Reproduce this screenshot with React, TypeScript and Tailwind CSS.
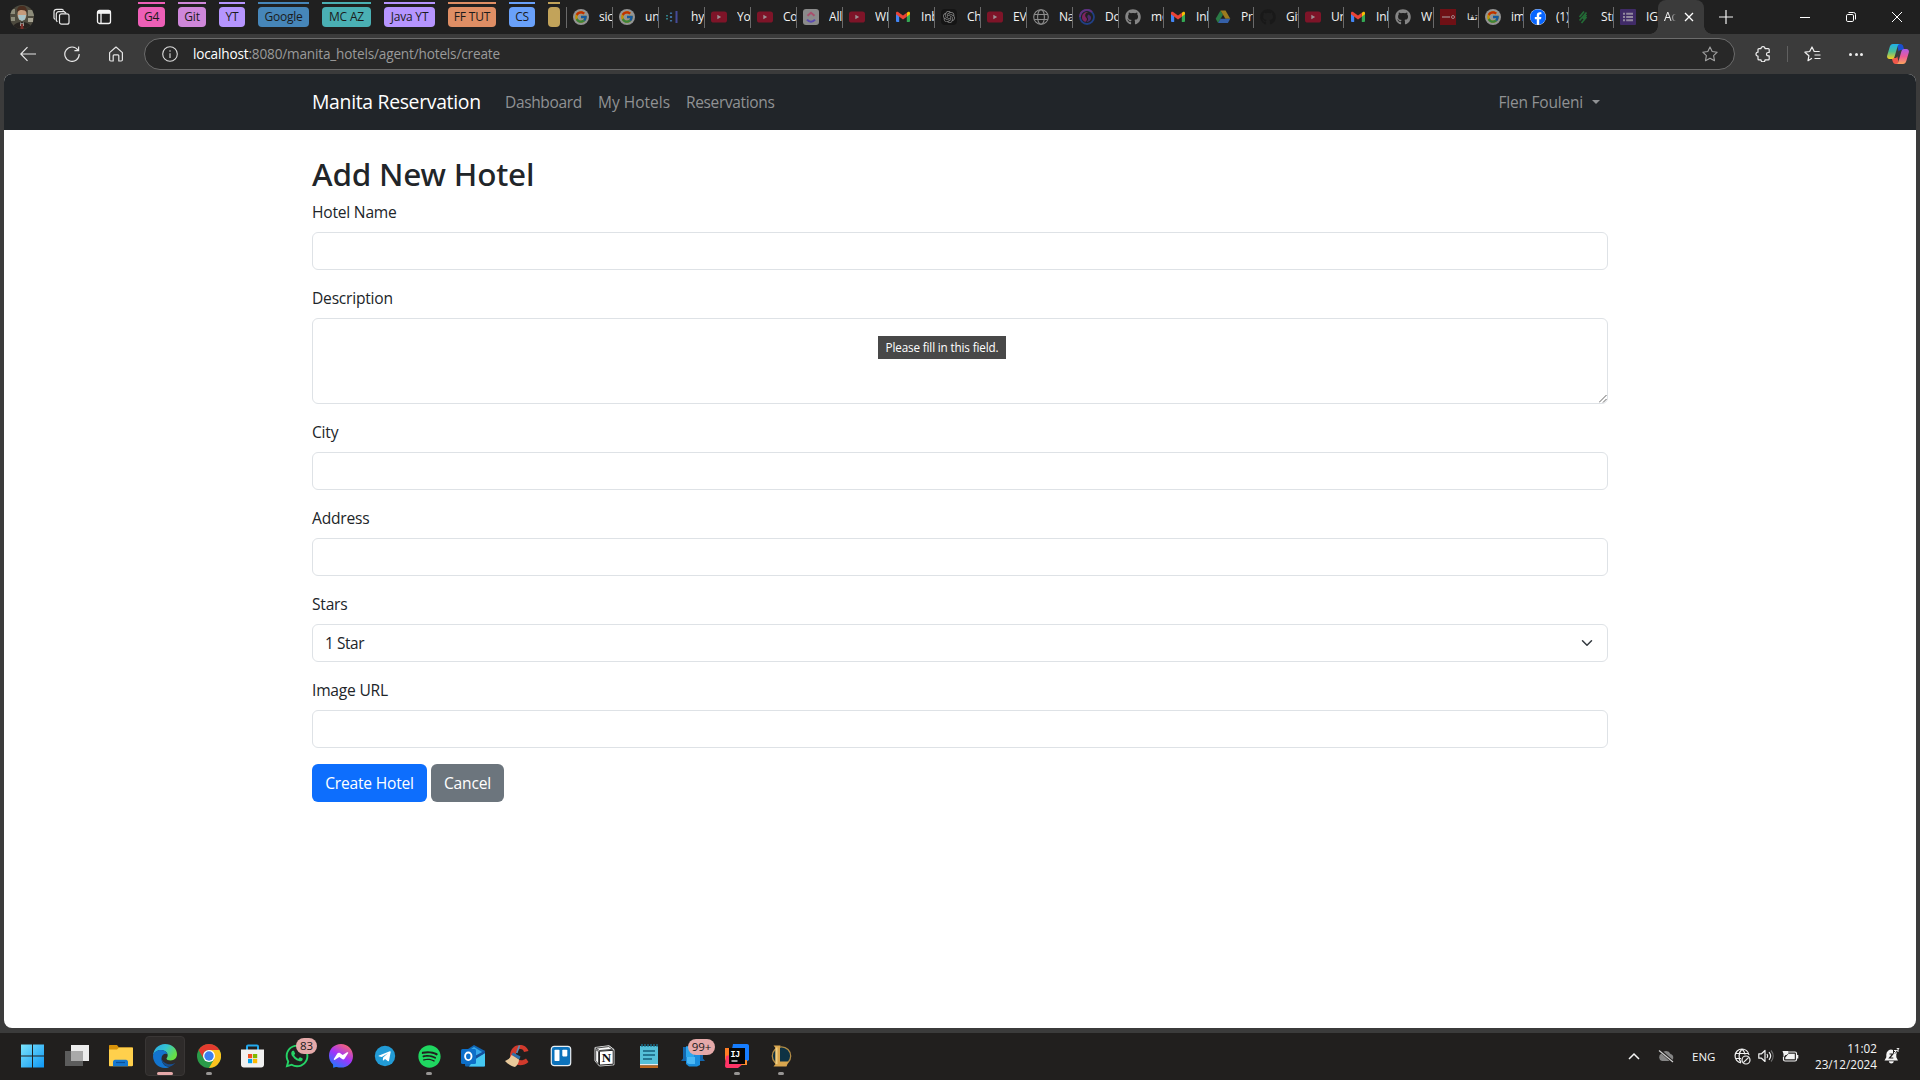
import type { ReactNode } from 'react';
import { FcGoogle } from 'react-icons/fc';
import { FaFacebook, FaGithub, FaSpotify, FaWhatsapp } from 'react-icons/fa';
import { SiOpenai } from 'react-icons/si';

/* ---------- tab strip icons ---------- */

const Google = () => (
  <span className="flex size-4 items-center justify-center rounded-full bg-[#949494]">
    <FcGoogle className="size-[14px] brightness-75" />
  </span>
);

const YouTube = () => (
  <svg viewBox="0 0 16 16" className="size-4">
    <rect y="2.5" width="16" height="11" rx="2.6" fill="#7e1428" />
    <path d="M6.3 5.7v4.6L10.2 8z" fill="#9c8f92" />
  </svg>
);

const Gmail = () => (
  <svg viewBox="0 0 16 16" className="size-4">
    <path d="M1 4.5l3.2 2.4V13H2a1 1 0 0 1-1-1z" fill="#4285f4" />
    <path d="M15 4.5l-3.2 2.4V13H14a1 1 0 0 0 1-1z" fill="#34a853" />
    <path d="M11.8 3.7l1.1-.8C13.800 2.300 15 2.900 15 4v1.300l-3.200 2.400z" fill="#fbbc04" />
    <path d="M1 4c0-1.100 1.200-1.700 2.100-1.100L8 6.600l3.800-2.900v4L8 10.600 1 5.300z" fill="#ea4335" />
  </svg>
);

const Bars = () => (
  <svg viewBox="0 0 16 16" className="size-4">
    <path d="M2 6v1.500M2 9v1.500" stroke="#2f7f86" strokeWidth="2" />
    <path d="M6 3.500V5M6 7v2M6 11v1.500" stroke="#3f6f9f" strokeWidth="2.200" />
    <path d="M11.500 2v12" stroke="#454a98" strokeWidth="2" />
  </svg>
);

const ClickUp = () => (
  <svg viewBox="0 0 16 16" className="size-4">
    <rect width="16" height="16" rx="3" fill="#8b8b8b" />
    <path d="M4.500 6.800L8 3.800l3.500 3" fill="none" stroke="#a84f6c" strokeWidth="2" />
    <path d="M4 10.600c2.200 2.800 5.800 2.800 8 0" fill="none" stroke="#5b4bb0" strokeWidth="2" />
  </svg>
);

const OpenAi = () => (
  <span className="flex size-4 items-center justify-center rounded-sm bg-[#151515]">
    <SiOpenai className="size-3 text-[#858585]" />
  </span>
);

const Globe = () => (
  <svg viewBox="0 0 16 16" className="size-4" fill="none" stroke="#8c8c8c" strokeWidth="1.100">
    <circle cx="8" cy="8" r="7.300" />
    <ellipse cx="8" cy="8" rx="3.400" ry="7.300" />
    <path d="M1.300 5.500h13.400M1.300 10.500h13.400" />
  </svg>
);

const Swirl = () => (
  <svg viewBox="0 0 16 16" className="size-4" fill="none">
    <circle cx="8" cy="8" r="7" stroke="#203f84" strokeWidth="1.800" />
    <path d="M1 8a7 7 0 0 1 12-5" stroke="#61307e" strokeWidth="1.800" />
    <path d="M9.500 3.200a3.200 3.200 0 0 0-2.500 5.400c1.500 1.400 1.300 3.200-.8 4.300A5 5 0 0 1 3 8a5 5 0 0 1 6.500-4.800z" fill="#7c2460" />
    <path d="M9 5.500c2.500.5 3.600 2.500 3 4.500-.7 2-2.500 3-4.800 3 2.300-1.200 2.600-3.200 1-4.900" fill="#4d2a70" />
  </svg>
);

const GitHub = () => <FaGithub className="size-4 text-[#858585]" />;
const GitHubDark = () => <FaGithub className="size-4 text-[#191919]" />;

const Drive = () => (
  <svg viewBox="0 0 16 16" className="size-4">
    <path d="M5.500 1.500L.7 9.800l2.400 4.100L8 5.700z" fill="#2a7a45" />
    <path d="M5.500 1.500h5L15.300 9.800h-4.900z" fill="#9c7c1f" />
    <path d="M5.500 9.800h9.800l-2.400 4.100H3.100z" fill="#3560a8" />
  </svg>
);

const RedTag = () => (
  <span className="flex size-4 items-center justify-center gap-px bg-[#6f1015]">
    <span className="h-[2px] w-[8px] bg-[#8d5a5d]" />
    <span className="size-[4px] rounded-full border border-[#a08486]" />
  </span>
);

const Facebook = () => (
  <span className="flex size-4 rounded-full bg-white">
    <FaFacebook className="size-4 text-[#0866ff]" />
  </span>
);

const Strips = () => (
  <svg viewBox="0 0 16 16" className="size-4" fill="none" stroke="#236b36" strokeWidth="1.700">
    <path d="M4.500 8L9 2.500M4.500 11.500l7-8M8 10l3.500-4M6.500 14L11.500 8" />
  </svg>
);

const Forms = () => (
  <svg viewBox="0 0 16 16" className="size-4">
    <rect width="16" height="16" rx="1" fill="#402b67" />
    <path d="M3 4.700h2M3 8h2M3 11.300h2M6.200 4.700H13M6.200 8H13M6.200 11.300H13" stroke="#93899f" strokeWidth="1.900" />
  </svg>
);

type Tab = { icon: () => ReactNode; title: string; narrow?: boolean; noEdge?: boolean; rtl?: boolean };

const tabs: Tab[] = [
  { icon: Google, title: 'sic' },
  { icon: Google, title: 'un' },
  { icon: Bars, title: 'hy' },
  { icon: YouTube, title: 'Yo' },
  { icon: YouTube, title: 'Co' },
  { icon: ClickUp, title: 'All' },
  { icon: YouTube, title: 'WI' },
  { icon: Gmail, title: 'Inb' },
  { icon: OpenAi, title: 'Ch' },
  { icon: YouTube, title: 'EV' },
  { icon: Globe, title: 'Na' },
  { icon: Swirl, title: 'Do' },
  { icon: GitHub, title: 'mo', narrow: true },
  { icon: Gmail, title: 'Inb', narrow: true },
  { icon: Drive, title: 'Pro', narrow: true },
  { icon: GitHubDark, title: 'Git', narrow: true },
  { icon: YouTube, title: 'Un', narrow: true },
  { icon: Gmail, title: 'Inb', narrow: true },
  { icon: GitHub, title: 'W', narrow: true },
  { icon: RedTag, title: 'تفا', narrow: true, rtl: true },
  { icon: Google, title: 'im', narrow: true },
  { icon: Facebook, title: '(1)', narrow: true },
  { icon: Strips, title: 'Str', narrow: true },
  { icon: Forms, title: 'IG', narrow: true, noEdge: true },
];

const groups = [
  { name: 'G4', style: 'w-[27px] bg-[#ee5fb7]', gap: 'mr-[13px]' },
  { name: 'Git', style: 'w-[28px] bg-[#cf87da]', gap: 'mr-[13px]' },
  { name: 'YT', style: 'w-[26px] bg-[#b695ff]', gap: 'mr-[13px]' },
  { name: 'Google', style: 'w-[51px] bg-[#4686b9]', gap: 'mr-[13px]' },
  { name: 'MC AZ', style: 'w-[49px] bg-[#4ab0b4]', gap: 'mr-[13px]' },
  { name: 'Java YT', style: 'w-[51px] bg-[#b695ff]', gap: 'mr-[13px]' },
  { name: 'FF TUT', style: 'w-[48px] bg-[#df8e64]', gap: 'mr-[13px]' },
  { name: 'CS', style: 'w-[26px] bg-[#69a1fa]', gap: 'mr-[13px]' },
  { name: '', style: 'w-[12px] bg-[#c2a35a]', gap: 'mr-[6px]' },
];

function Avatar() {
  return (
    <svg viewBox="0 0 24 24" className="ml-[10px] size-6">
      <defs>
        <clipPath id="avatar">
          <circle cx="12" cy="12" r="12" />
        </clipPath>
      </defs>
      <g clipPath="url(#avatar)">
        <path d="M0 0h24v24H0z" fill="#4d4a3e" />
        <path d="M0 4h5v5H0zM18 5h6v6h-6zM1 12h4v4H1z" fill="#8d8c7a" />
        <path d="M18 13h5v4h-5z" fill="#a8a493" />
        <path d="M3 24c0-5 4-7 9-7s9 2 9 7z" fill="#26221f" />
        <ellipse cx="12" cy="9.500" rx="4.500" ry="6" fill="#c69b7c" />
        <path d="M7 7c0-5 2-6 5-6s5 1 5 6c-2-2-7-3-10 0z" fill="#4b2e20" />
        <path d="M8 10h8l-1 4.500-3 1.500-3-1.500z" fill="#a9c3c8" />
        <path d="M10.500 17l1.500 2 1.500-2 .5 4h-4z" fill="#b9b5ae" />
        <path d="M11 19h2l.6 5h-3.200z" fill="#7d2f2a" />
      </g>
    </svg>
  );
}

function TabStrip() {
  return (
    <div className="flex h-[34px] bg-[#202020] text-[12px] text-[#f2f2f2]">
      <div className="flex h-[34px] w-[138px] shrink-0 items-center">
        <Avatar />
        <svg viewBox="0 0 18 18" className="ml-[19px] size-[18px]" fill="none" stroke="#e8e8e8" strokeWidth="1.200">
          <rect x="6.500" y="5.800" width="9.500" height="10.400" rx="2" />
          <path d="M4.300 13.800l-1-1.400V6.200c0-1.500 1-2.500 2.500-2.500h5.500l1.800 1.500M2 11.500L1 10V4C1 2.300 2.100 1.300 3.700 1.300H9l1.700 1.300" />
        </svg>
        <svg viewBox="0 0 16 16" className="ml-[25px] size-4" fill="none" stroke="#f4f4f4" strokeWidth="1.300">
          <rect x="1.500" y="1.500" width="13" height="13" rx="2" />
          <path d="M1.500 3.300h13" strokeWidth="3" />
          <path d="M5 4v10" />
        </svg>
      </div>
      {groups.map((g, i) => (
        <div key={i} className={`flex shrink-0 flex-col pt-[2px] ${g.gap}`}>
          <div className={`h-[2px] ${g.style}`} />
          <div className={`mt-[3px] flex h-5 items-center justify-center rounded-[4px] text-[12px] leading-none tracking-[-0.200px] whitespace-nowrap text-[#1b1b1b] ${g.style}`}>
            {g.name}
          </div>
        </div>
      ))}
      <div className="mt-[7px] h-[21px] w-px shrink-0 bg-[#6a6a6a]" />
      {tabs.map((t, i) => (
        <div key={i} className={`flex shrink-0 items-center ${t.narrow ? 'w-[45px]' : 'w-[46px]'}`}>
          <div className="ml-[6px] shrink-0">{t.icon()}</div>
          <div
            dir={t.rtl ? 'rtl' : 'ltr'}
            className={`ml-[10px] min-w-0 flex-1 overflow-hidden leading-[18px] tracking-[-0.200px] whitespace-nowrap ${t.rtl ? 'text-[9px]' : ''}`}
          >
            {t.title}
          </div>
          <div className={`h-[21px] w-px shrink-0 ${t.noEdge ? 'bg-transparent' : 'bg-[#6a6a6a]'}`} />
        </div>
      ))}
      <div className="relative -ml-px flex w-[46px] shrink-0 items-center rounded-t-[8px] bg-[#3b3b3b]">
        <div className="absolute bottom-0 -left-2 size-2 bg-[radial-gradient(circle_at_0_0,transparent_7.500px,#3b3b3b_8px)]" />
        <div className="absolute -right-2 bottom-0 size-2 bg-[radial-gradient(circle_at_100%_0,transparent_7.500px,#3b3b3b_8px)]" />
        <div className="ml-[6px] w-3 overflow-hidden mask-r-from-50% leading-[18px]">Ad</div>
        <svg viewBox="0 0 10 10" className="ml-[8px] size-[10px]" stroke="#fff" strokeWidth="1.300">
          <path d="M1 1l8 8M9 1L1 9" />
        </svg>
      </div>
      <svg viewBox="0 0 16 16" className="mt-[9px] ml-[14px] size-4" stroke="#f4f4f4" strokeWidth="1.200">
        <path d="M8 1v14M1 8h14" />
      </svg>
      <div className="ml-auto flex w-[138px] items-center">
        <div className="flex w-[46px] justify-center">
          <div className="h-px w-[10px] bg-white" />
        </div>
        <div className="flex w-[46px] justify-center">
          <svg viewBox="0 0 10 10" className="size-[10px]" fill="none" stroke="#fff">
            <rect x=".5" y="2.500" width="7" height="7" rx="1.300" />
            <path d="M2.500.5h5a2 2 0 0 1 2 2v5" />
          </svg>
        </div>
        <div className="flex w-[46px] justify-center">
          <svg viewBox="0 0 10 10" className="size-[10px]" stroke="#fff">
            <path d="M0 0l10 10M10 0L0 10" />
          </svg>
        </div>
      </div>
    </div>
  );
}

function Toolbar() {
  return (
    <div className="flex h-10 items-center bg-[#3b3b3b]">
      <svg viewBox="0 0 16 16" className="ml-5 size-4" fill="none" stroke="#e6e6e6" strokeWidth="1.200">
        <path d="M16 8H1M7.500 1.200L.8 8l6.700 6.800" />
      </svg>
      <svg viewBox="0 0 16 16" className="ml-7 size-4" fill="none" stroke="#e6e6e6" strokeWidth="1.200">
        <path d="M14 4.200A7.200 7.200 0 1 0 15.200 8M14.600.5v4.200h-4.200" />
      </svg>
      <svg viewBox="0 0 16 16" className="ml-7 size-4" fill="none" stroke="#e6e6e6" strokeWidth="1.200" strokeLinejoin="round">
        <path d="M1.600 6.600L8 1l6.400 5.600v7.200c0 .7-.5 1.200-1.200 1.200h-2.400V9.800c0-.5-.4-.9-.9-.9H6.100c-.5 0-.9.4-.9.9V15H2.800c-.7 0-1.200-.5-1.200-1.200z" />
      </svg>
      <div className="ml-[20px] flex h-8 w-[1591px] items-center rounded-full border border-[#6c6c6c] bg-[#282828]">
        <svg viewBox="0 0 16 16" className="ml-[17px] size-4" fill="none" stroke="#dcdcdc" strokeWidth="1.100">
          <circle cx="8" cy="8" r="7.300" />
          <path d="M8 7.200V12M8 4.200v1.500" />
        </svg>
        <div className="ml-[15px] text-[13.600px] leading-5 tracking-[-0.170px] text-[#9a9a9a]">
          <span className="text-white">localhost</span>:8080/manita_hotels/agent/hotels/create
        </div>
        <svg viewBox="0 0 16 16" className="mr-4 ml-auto size-4" fill="none" stroke="#a2a2a2" strokeWidth="1.100" strokeLinejoin="round">
          <path d="M8 .9l2.200 4.600 5 .7-3.600 3.500.9 5L8 12.300l-4.500 2.400.9-5L.8 6.200l5-.7z" />
        </svg>
      </div>
      <svg viewBox="0 0 16 16" className="ml-[20px] size-4" fill="none" stroke="#f0f0f0" strokeWidth="1.200" strokeLinejoin="round">
        <path d="M6 2.600a2 2 0 0 1 4 0h3.200c.6 0 1 .4 1 1v2.900h-1a1.700 1.700 0 0 0 0 3.400h1v3c0 .6-.4 1-1 1H10a2 2 0 0 1-4 0H4c-.6 0-1-.4-1-1v-2.700a2 2 0 0 1 0-4V3.600c0-.6.4-1 1-1z" />
      </svg>
      <div className="ml-4 h-4 w-px bg-[#606060]" />
      <svg viewBox="0 0 17 16" className="ml-4 h-4 w-[17px]" fill="none" stroke="#f0f0f0" strokeWidth="1.200" strokeLinejoin="round">
        <path d="M8 12.200l-4 2.500.9-4.900L.9 6.200l4.800-.7L8 1l2.200 4.500h5.500M10.500 9h6M10.500 12.500h6" />
      </svg>
      <div className="ml-7 flex w-[14px] justify-between">
        <span className="size-[3px] rounded-full bg-[#eee]" />
        <span className="size-[3px] rounded-full bg-[#eee]" />
        <span className="size-[3px] rounded-full bg-[#eee]" />
      </div>
      <svg viewBox="0 0 22 20" className="ml-6 h-5 w-[22px]">
        <defs>
          <linearGradient id="cpA" x1="0" y1="0" x2="0" y2="1">
            <stop offset="0" stopColor="#1fb0ea" />
            <stop offset=".5" stopColor="#4cbf95" />
            <stop offset="1" stopColor="#f5cf1e" />
          </linearGradient>
          <linearGradient id="cpB" x1="0" y1="0" x2="0" y2="1">
            <stop offset="0" stopColor="#ad5ce8" />
            <stop offset=".5" stopColor="#ec5a97" />
            <stop offset="1" stopColor="#fba45c" />
          </linearGradient>
        </defs>
        <path d="M10 0h3.500c1.500 0 2.300 1 2.700 2.200L17.300 6H14c-1.400 0-2 .8-2.300 1.800z" fill="#1a4fd0" />
        <path d="M12 20H8.500c-1.500 0-2.300-1-2.700-2.200L4.700 14H8c1.400 0 2-.8 2.300-1.800z" fill="#f0574a" />
        <path d="M6 0h7c-1.500 0-2 1-2.400 2.300L7.800 12c-.5 1.800-1.300 3-3 3H2.500C.5 15-.3 13.500.2 11.500L2.700 3C3.300 1 4.300 0 6 0z" fill="url(#cpA)" />
        <path d="M16 20H9c1.500 0 2-1 2.400-2.300L14.200 8c.5-1.800 1.300-3 3-3h2.300c2 0 2.800 1.500 2.300 3.500L19.300 17c-.6 2-1.600 3-3.300 3z" fill="url(#cpB)" />
      </svg>
    </div>
  );
}

/* ---------- web page ---------- */

const inputBox = 'block w-full rounded-[6px] border border-[#dee2e6] bg-white';

function Field({ label, children }: { label: string; children?: ReactNode }) {
  return (
    <div className="mb-4">
      <label className="mb-2 block text-[15.600px] leading-6 tracking-[-0.220px]">{label}</label>
      {children ?? <div className={`${inputBox} h-[38px]`} />}
    </div>
  );
}

function HotelPage() {
  return (
    <div className="mx-1 h-[954px] overflow-hidden rounded-[8px] bg-white text-[#212529]">
      <nav className="h-14 bg-[#212529]">
        <div className="mx-auto flex h-14 w-[1296px] items-center text-[15.500px] leading-6 whitespace-nowrap text-[#909294]">
          <div className="w-[193px] text-[19.400px] tracking-[-0.320px] text-white">Manita Reservation</div>
          <div className="w-[93px] tracking-[-0.350px]">Dashboard</div>
          <div className="w-[88px]">My Hotels</div>
          <div className="tracking-[-0.350px]">Reservations</div>
          <div className="mr-2 ml-auto flex items-center tracking-[-0.200px]">
            Flen Fouleni
            <span className="ml-[9px] border-x-[4.500px] border-t-[4.500px] border-x-transparent border-t-[#909294]" />
          </div>
        </div>
      </nav>
      <main className="mx-auto w-[1296px] pt-6">
        <h2 className="mb-2 pt-px font-['Noto_Sans',sans-serif] text-[31.500px] leading-[37.400px] font-medium tracking-[-0.200px]">Add New Hotel</h2>
        <Field label="Hotel Name" />
        <Field label="Description">
          <div className="relative">
            <div className={`${inputBox} h-[86px]`} />
            <svg viewBox="0 0 8 8" className="absolute right-[1px] bottom-[1px] size-2" stroke="#555" strokeWidth=".9">
              <path d="M0 7.500L7.500 0M4 7.500L7.500 4" />
            </svg>
            <div className="absolute top-[18px] left-[566px] flex h-[23px] w-32 items-center justify-center bg-[#484848] text-[11.700px] leading-none tracking-[-0.150px] whitespace-nowrap text-white">
              Please fill in this field.
            </div>
          </div>
        </Field>
        <Field label="City" />
        <Field label="Address" />
        <Field label="Stars">
          <div className={`${inputBox} flex! h-[38px] items-center justify-between pr-[14px] pl-3`}>
            <span className="text-[15.400px] tracking-[-0.400px]">1 Star</span>
            <svg viewBox="0 0 16 16" className="size-3" fill="none" stroke="#343a40" strokeWidth="2" strokeLinecap="round" strokeLinejoin="round">
              <path d="m2 5 6 6 6-6" />
            </svg>
          </div>
        </Field>
        <Field label="Image URL" />
        <div className="flex gap-1 text-[15.600px] tracking-[-0.200px] text-white">
          <div className="flex h-[38px] w-[115px] items-center justify-center rounded-[6px] bg-[#0d6efd]">Create Hotel</div>
          <div className="flex h-[38px] w-[73px] items-center justify-center rounded-[6px] bg-[#6c757d]">Cancel</div>
        </div>
      </main>
    </div>
  );
}

/* ---------- taskbar icons ---------- */

const Windows = () => (
  <svg viewBox="0 0 24 24" className="size-6">
    <defs>
      <linearGradient id="win" x1="0" y1="0" x2="1" y2="1">
        <stop offset="0" stopColor="#7be3fb" />
        <stop offset="1" stopColor="#0e97f5" />
      </linearGradient>
    </defs>
    <path d="M0 .5h11v11H0zM12 .5h11v11H12zM0 12.500h11v11H0zM12 12.500h11v11H12z" fill="url(#win)" />
  </svg>
);

const TaskView = () => (
  <svg viewBox="0 0 24 24" className="size-6">
    <path d="M6 1h18v16H6z" fill="#ececec" />
    <path d="M0 7h18v15H0z" fill="#5c5c5c" />
    <path d="M6 7h12v10H6z" fill="#a9a9a9" />
  </svg>
);

const Folder = () => (
  <svg viewBox="0 0 24 24" className="size-6">
    <path d="M0 2c0-.6.4-1 1-1h7l2 2.500h13c.6 0 1 .4 1 1V10H0z" fill="#d9930a" />
    <path d="M0 5.500h8l2-2h13c.6 0 1 .4 1 1V21c0 .8-.4 1.200-1 1.200H1c-.6 0-1-.4-1-1z" fill="#ffd04c" />
    <path d="M4 22.200V18c0-1.300.8-2.300 2-2.300h11c1.200 0 2 1 2 2.300v4.200z" fill="#1778cf" />
    <path d="M7 18.500h9" stroke="#0c4f96" strokeWidth="1.200" />
  </svg>
);

const Edge = () => (
  <svg viewBox="0 0 24 24" className="size-6">
    <defs>
      <linearGradient id="edgeTop" x1="0" y1="0" x2="1" y2=".5">
        <stop offset="0" stopColor="#2aa5e4" />
        <stop offset=".5" stopColor="#33c3d4" />
        <stop offset="1" stopColor="#67e043" />
      </linearGradient>
    </defs>
    <path d="M0 11.500C.5 5 5.500 0 12 0c7 0 12 4.800 12 10.300 0 3.800-3 6.200-6.300 6.200-2.700 0-4.200-1-4.200-2 0-.8 1.200-1.200 1.200-3.300C14.700 8.300 11.600 6 8 6 4 6 1 8.500 0 11.500z" fill="url(#edgeTop)" />
    <path d="M0 12C.3 8.400 3.800 6 8 6c3.500 0 6 2 6.500 4.300C12 9 8.500 10.500 8.500 14.500c0 4.500 3.500 9 8.500 8-1.500 1-3.200 1.500-5 1.500C5 24 0 18.500 0 12z" fill="#1374ce" />
    <path d="M8.500 14c0 4.500 3.500 9 8.500 8.500 2-.6 4.200-2 5.300-3.500-6 3-12.800.5-13.800-5z" fill="#174f91" />
  </svg>
);

const Chrome = () => (
  <svg viewBox="0 0 24 24" className="size-6">
    <circle cx="12" cy="12" r="12" fill="#2a9b48" />
    <path d="M12 24a12 12 0 0 0 10.400-18H12l5.200 9z" fill="#fcc31e" />
    <path d="M1.600 6A12 12 0 0 1 22.400 6H12a6 6 0 0 0-5.200 9z" fill="#e33b2e" />
    <circle cx="12" cy="12" r="6" fill="#fff" />
    <circle cx="12" cy="12" r="4.700" fill="#3c7fee" />
  </svg>
);

const Store = () => (
  <svg viewBox="0 0 24 24" className="size-6">
    <path d="M6 6V2.500c0-.6.4-1 1-1h9c.6 0 1 .4 1 1V6" fill="none" stroke="#23a9ee" strokeWidth="2" />
    <path d="M0 5.500h23v15.200c0 1.600-1.200 2.800-2.800 2.800H2.800C1.200 23.500 0 22.300 0 20.700z" fill="#f1f1f1" />
    <path d="M7 10h4.200v4.200H7z" fill="#f25022" />
    <path d="M12 10h4.200v4.200H12z" fill="#7fba00" />
    <path d="M7 15h4.200v4.200H7z" fill="#00a4ef" />
    <path d="M12 15h4.200v4.200H12z" fill="#ffb900" />
  </svg>
);

const Messenger = () => (
  <svg viewBox="0 0 24 24" className="size-6">
    <defs>
      <linearGradient id="msg" x1=".2" y1="1" x2=".8" y2="0">
        <stop offset="0" stopColor="#1a7cff" />
        <stop offset=".5" stopColor="#a334fa" />
        <stop offset="1" stopColor="#ff6a68" />
      </linearGradient>
    </defs>
    <path d="M12 0C5.200 0 0 5 0 11.700c0 3.500 1.400 6.500 3.800 8.600.3.300.3.900.3 1.300l.1 2.100 2.700-.7c.3-.1.6-.1.900 0 1.300.4 2.700.6 4.200.6 6.800 0 12-5 12-11.700S18.800 0 12 0z" fill="url(#msg)" />
    <path d="M4.800 15.100l3.500-5.600c.6-.9 1.800-1.100 2.600-.5l2.800 2.100 4.300-2.800c.8-.5 1.500.2 1.200.7l-3.500 5.600c-.6.900-1.800 1.100-2.600.5l-2.800-2.100-4.300 2.800c-.8.5-1.500-.2-1.200-.7z" fill="#fff" />
  </svg>
);

const Telegram = () => (
  <svg viewBox="0 0 24 24" className="size-6">
    <circle cx="12" cy="12" r="10.200" fill="#229bd6" />
    <path d="M5.500 11.800l11.300-4.500c.6-.2 1 .1.900.8l-1.700 8.700c-.1.600-.5.700-1 .4l-3-2.200-1.500 1.500-.7-.3.3-2.700 4.800-4.300-6.100 3.700-3.200-.6z" fill="#fff" />
  </svg>
);

const Spotify = () => (
  <span className="flex size-[23px] items-center justify-center">
    <FaSpotify className="size-[23px] text-[#1fd760]" />
  </span>
);

const Outlook = () => (
  <svg viewBox="0 0 24 24" className="size-6">
    <path d="M4 7l9-6 11 6v14c0 1-.7 1.500-1.500 1.500h-17C4.500 22.500 4 22 4 21z" fill="#1066b5" />
    <path d="M7 7l6-4 8 5v6l-8 4-6-4z" fill="#36a8ec" />
    <path d="M13 16l11-7v12.500c0 .6-.5 1-1 1H8z" fill="#45c8f2" />
    <path d="M13 16L24 9V6.500L12 13z" fill="#14509c" />
    <rect y="5" width="15" height="15" rx="1.500" fill="#0d6fc9" />
    <ellipse cx="7.300" cy="12.300" rx="3.200" ry="3.800" fill="none" stroke="#fff" strokeWidth="1.900" />
  </svg>
);

const CCleaner = () => (
  <svg viewBox="0 0 24 24" className="size-6">
    <path d="M23.500 7C21 0 13 0 9 3c-4 3-5 9-3 13 3 6 12 7 17.500 2l-2.500-3.500c-3 2.500-8 2.500-9.500-1-1.500-4 .5-8 3.500-8.500 2-.3 3.500.8 4 3z" fill="#d13a2c" />
    <path d="M14.500 1.500l-2.800 7.500" stroke="#5e8eb5" strokeWidth="1.700" />
    <path d="M8 8.500l7.500 4-1.200 3L6.500 11z" fill="#2c71aa" />
    <path d="M6.500 11l7.500 4.500c0 3-1.500 6-4 7.500-4-1-7.500-3-10-6 3-1 5.200-3 6.500-6z" fill="#e8c99b" />
  </svg>
);

const Trello = () => (
  <svg viewBox="0 0 24 24" className="size-6">
    <rect x="2.300" y="2.300" width="19.400" height="19.400" rx="3" fill="#0c72bb" stroke="#e9eef2" strokeWidth="1.200" />
    <rect x="5.500" y="5.800" width="5" height="11.200" rx=".8" fill="#fff" />
    <rect x="13.300" y="5.800" width="5" height="6.600" rx=".8" fill="#fff" />
  </svg>
);

const Notion = () => (
  <svg viewBox="0.500 0 24 24" className="size-6">
    <path d="M2.500 3.500l14-1.800 5 3.800v15.300L7 22l-4.500-5z" fill="#ececec" stroke="#dcdcdc" />
    <path d="M3.200 4.200l13-1.600 3.800 2.700L7 6.500zM3.200 5.500L6 7.500v12.800l-2.800-3.500z" fill="#f8f8f8" stroke="#222" strokeWidth=".8" />
    <path d="M7 7.200l13.700-.9v13.900L7 21.100z" fill="#fff" stroke="#222" strokeWidth="1" />
    <text x="13.900" y="18.200" textAnchor="middle" className="font-['Liberation_Serif',serif] text-[13px] font-bold" fill="#111">N</text>
  </svg>
);

const Notepad = () => (
  <svg viewBox="0 0 24 24" className="size-6">
    <path d="M3 2h18v18H3z" fill="#55bfd8" />
    <path d="M3 20h18v1.500H3z" fill="#e9e9e9" />
    <path d="M3 21.500h18V24H3z" fill="#b9661d" />
    <path d="M6 7h12M6 11h12M6 15h9" stroke="#155f7b" strokeWidth="1.500" />
    <path d="M5 0v3M8 0v3M11 0v3M14 0v3M17 0v3M20 0v3" stroke="#1b7694" strokeWidth="1.300" />
  </svg>
);

const PhoneLink = () => (
  <svg viewBox="0 0 24 24" className="size-6">
    <path d="M2 3h20v11.500l2 2.500H0l2-2.500z" fill="#1267ae" />
    <path d="M5 2.500h14V21l-3 1.500H8L5 20z" fill="#198ddd" />
    <path d="M5 2.500h8V13H5z" fill="#2ba7ee" />
    <path d="M6 13h8v7H8l-2-1z" fill="#4bb8f5" />
  </svg>
);

const IntelliJ = () => (
  <svg viewBox="0 0 24 24" className="size-6">
    <path d="M0 4l9 0v16H2L0 15z" fill="#ff7d25" />
    <path d="M8 0h14c1.200 0 2 .8 2 2v14l-6 4L7 5z" fill="#167dff" />
    <path d="M1 12l8-2 9 10-5 4H2C.5 24 0 23 0 21.500z" fill="#ff3466" />
    <path d="M17 16h5v5h-6z" fill="#fb8b2e" />
    <rect x="4" y="4" width="16" height="16" fill="#050505" />
    <text x="5.500" y="12.800" className="font-['Liberation_Mono',monospace] text-[8.500px] font-bold tracking-[-0.500px]" fill="#fff">IJ</text>
    <path d="M6.500 17h6" stroke="#fff" strokeWidth="1.200" />
  </svg>
);

const League = () => (
  <svg viewBox="0 0 24 24" className="size-6">
    <circle cx="12.500" cy="12" r="9.200" fill="#0e3244" stroke="#b08a45" strokeWidth="1.300" />
    <path d="M4.500 1.500H11.500L11 4v13.500h8.500L17.500 22.500h-13l2-2.500V4z" fill="#d9a64e" />
    <path d="M6.500 3.500h2V20h-2z" fill="#f0cf83" />
  </svg>
);

const Badge = ({ children, className }: { children: string; className: string }) => (
  <span className={`absolute -top-[5px] flex h-4 items-center justify-center rounded-full bg-[#e5a9a9] text-[11.500px] leading-none text-[#1a1a1a] ${className}`}>{children}</span>
);

const apps: { icon: ReactNode; state?: 'active' | 'open' }[] = [
  { icon: <Windows /> },
  { icon: <TaskView /> },
  { icon: <Folder /> },
  { icon: <Edge />, state: 'active' },
  { icon: <Chrome />, state: 'open' },
  { icon: <Store /> },
  {
    icon: (
      <span className="relative">
        <FaWhatsapp className="size-[26px] text-[#25d366]" />
        <Badge className="left-[12px] w-[21px]">83</Badge>
      </span>
    ),
  },
  { icon: <Messenger /> },
  { icon: <Telegram /> },
  { icon: <Spotify />, state: 'open' },
  { icon: <Outlook /> },
  { icon: <CCleaner /> },
  { icon: <Trello /> },
  { icon: <Notion /> },
  { icon: <Notepad /> },
  {
    icon: (
      <span className="relative">
        <PhoneLink />
        <Badge className="left-[7px] w-[27px]">99+</Badge>
      </span>
    ),
  },
  { icon: <IntelliJ />, state: 'open' },
  { icon: <League />, state: 'open' },
];

function Taskbar() {
  return (
    <div className="flex h-[47px] bg-[#211f1e] pt-[3px] text-[#f5f5f5]">
      <div className="ml-[11px] flex">
        {apps.map((a, i) => (
          <div key={i} className="flex h-10 w-11 justify-center">
            <div
              className={`flex h-10 w-10 flex-col items-center rounded-[4px] ${
                a.state === 'active' ? 'border border-[#393635] bg-[#2e2b2a]' : 'border border-transparent'
              }`}
            >
              <div className="mt-[3px] flex h-8 items-center justify-center">{a.icon}</div>
              {a.state === 'active' && <div className="h-[3px] w-4 shrink-0 rounded-full bg-[#e5a9a9]" />}
              {a.state === 'open' && <div className="h-[3px] w-[6px] shrink-0 rounded-full bg-[#979594]" />}
            </div>
          </div>
        ))}
      </div>
      <div className="ml-auto flex h-10 items-center">
        <svg viewBox="0 0 12 8" className="h-2 w-3" fill="none" stroke="#f5f5f5" strokeWidth="1.500">
          <path d="M1 7l5-5 5 5" />
        </svg>
        <svg viewBox="0 0 16 14" className="ml-[18px] h-[14px] w-4">
          <path d="M4 12a4 4 0 0 1-.5-7.500 5 5 0 0 1 9 .5A3.600 3.600 0 0 1 12.500 12z" fill="#858585" />
          <path d="M2 1.500L15 13" stroke="#211f1e" strokeWidth="3" />
          <path d="M1 1.500L15 13" stroke="#d0d0d0" strokeWidth="1.200" />
        </svg>
        <div className="ml-[18px] w-[25px] pt-[2px] text-[11.500px] leading-none">ENG</div>
        <svg viewBox="0 0 17 17" className="ml-[17px] size-[17px]" fill="none" stroke="#f2f2f2" strokeWidth="1.200">
          <path d="M7 14.900A7 7 0 1 1 15 7M1.300 5.500h13.200M1.300 10.500H7M7 14.500C4.300 11 4.300 4.500 8 1c1.800 1.600 2.700 3.500 3 5.500" />
          <circle cx="12" cy="12" r="4" />
          <path d="M9.300 14.700l5.400-5.400" />
        </svg>
        <svg viewBox="0 0 16 16" className="ml-[7px] size-4" fill="none" stroke="#f2f2f2" strokeWidth="1.200" strokeLinejoin="round">
          <path d="M.8 5.800h2.700L7 2.500v11l-3.500-3.300H.8zM9 6c.9 1.200.9 2.800 0 4M11 4.200c2 2.300 2 5.300 0 7.600" />
          <path d="M13 2.500c2.800 3.300 2.800 7.700 0 11" stroke="#6f6f6f" />
        </svg>
        <svg viewBox="0 0 17 14" className="ml-2 h-[14px] w-[17px]">
          <path d="M6.500 3H13a1.500 1.500 0 0 1 1.500 1.500v6A1.500 1.500 0 0 1 13 12H3a1.500 1.500 0 0 1-1.500-1.500V8" fill="none" stroke="#f2f2f2" strokeWidth="1.200" />
          <path d="M6.500 4.800h6.300v5.500H3.300V8.500zM15 6h1.300v3.500H15z" fill="#f2f2f2" />
          <path d="M2 0v2M4 0v2M.5 2h6v2.500L4.500 6h-1L1.500 8.500V5z" fill="#f2f2f2" />
        </svg>
        <div className="ml-3 w-[66px] text-right text-[11.700px] leading-4 whitespace-nowrap">
          <div>11:02</div>
          <div>23/12/2024</div>
        </div>
        <svg viewBox="0 0 16 16" className="mr-[20px] ml-[7px] size-4">
          <path d="M.5 12.500l1.800-3.200V6.500A4.800 4.800 0 0 1 9 2v3.500h3.300v3.800l1.700 3.200zM4.800 13.300h5c-.3 1.600-1.200 2.200-2.500 2.200s-2.200-.6-2.500-2.200z" fill="#f5f5f5" />
          <path d="M5.500 6h3.300L5.500 10h3.800" fill="none" stroke="#211f1e" strokeWidth="1.200" />
          <path d="M10 2.500h2.500L10 5h3M12.700.6h2.300L12.700 3H15" fill="none" stroke="#f5f5f5" />
        </svg>
      </div>
    </div>
  );
}

export default function App() {
  return (
    <div className="flex h-[1080px] w-[1920px] flex-col overflow-hidden bg-[#3b3b3b] font-['Open_Sans','Noto_Sans',sans-serif]">
      <TabStrip />
      <Toolbar />
      <HotelPage />
      <div className="h-[5px] bg-[#3b3b3b]" />
      <Taskbar />
    </div>
  );
}
